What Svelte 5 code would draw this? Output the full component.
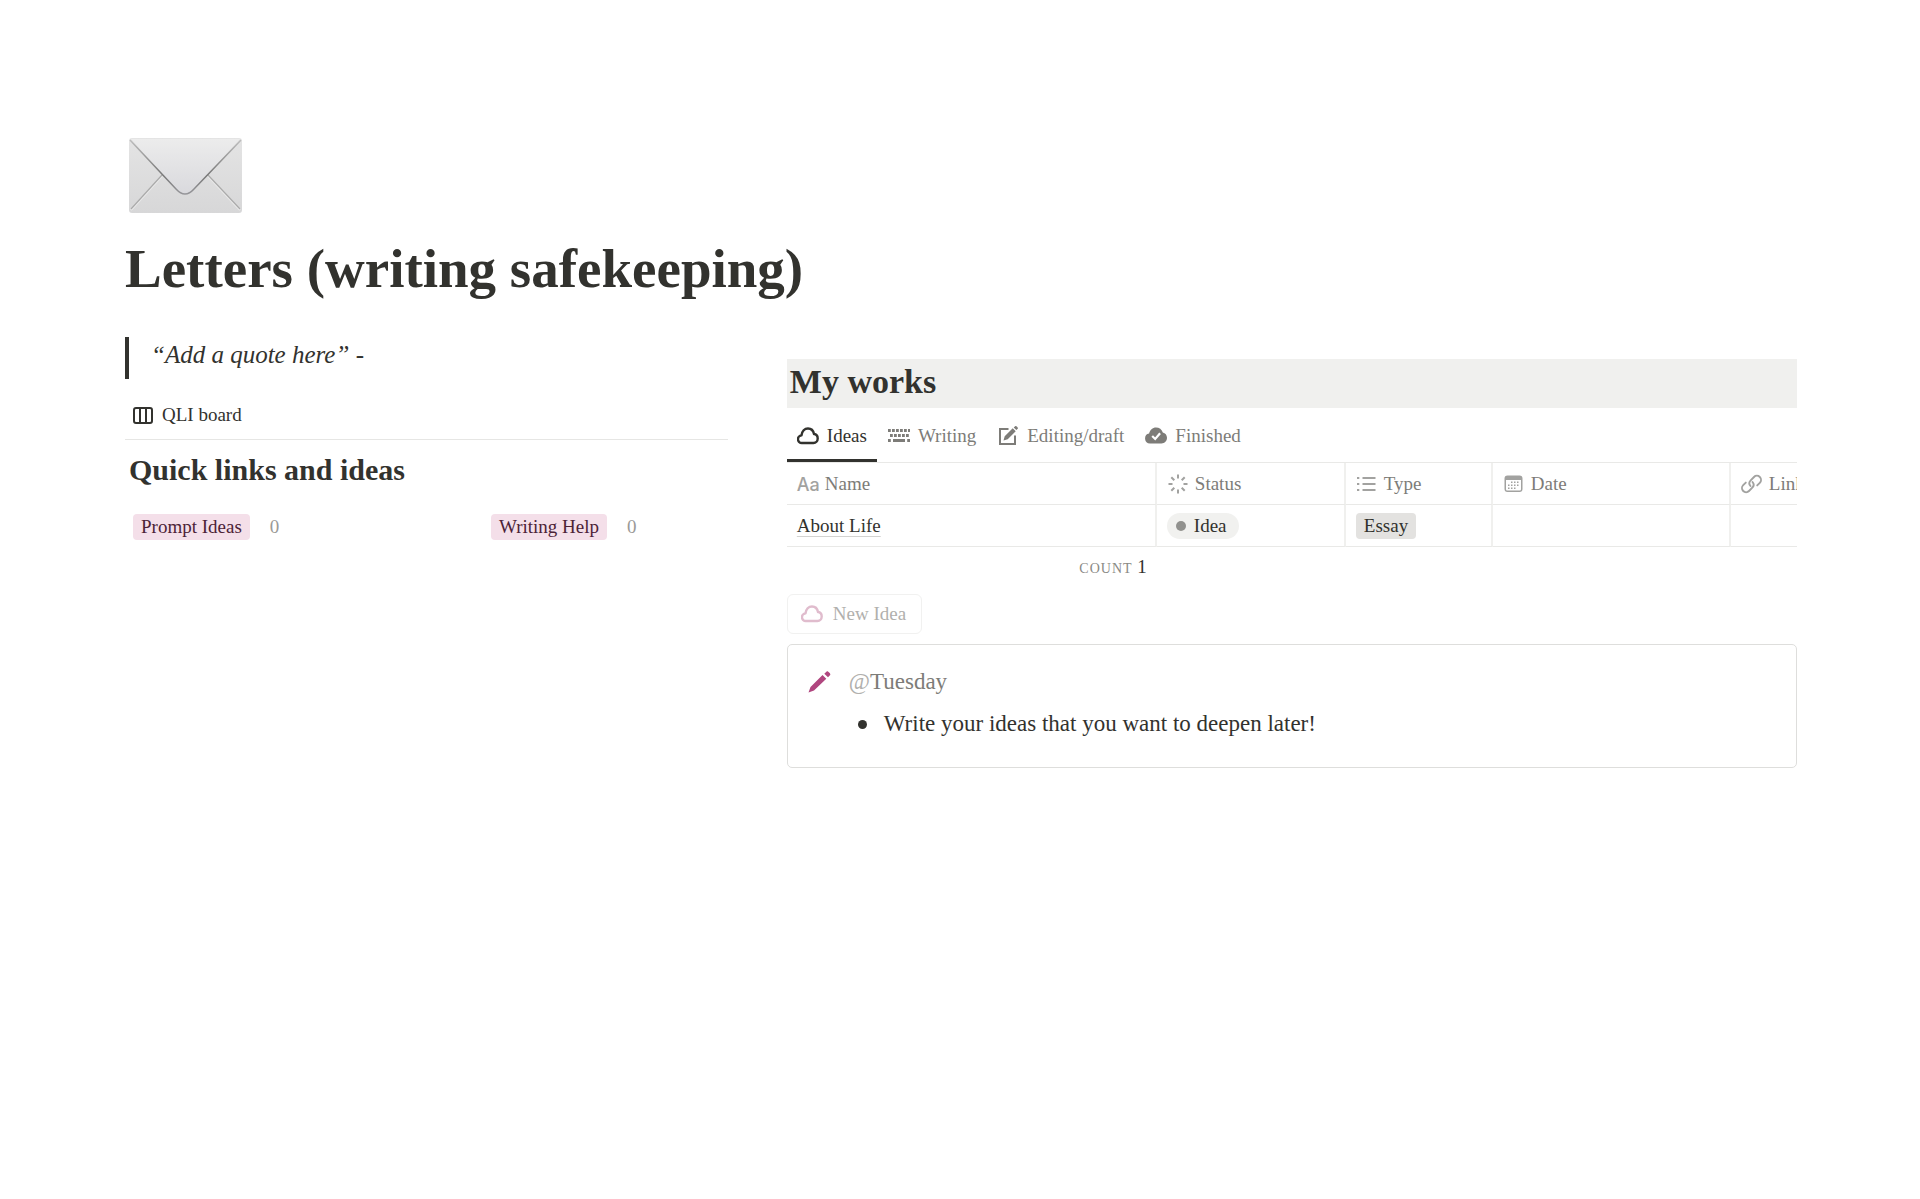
<script>
  let activeTab = $state('Ideas');

  const tabs = [
    { name: 'Ideas', icon: 'cloud' },
    { name: 'Writing', icon: 'keyboard' },
    { name: 'Editing/draft', icon: 'compose' },
    { name: 'Finished', icon: 'cloudCheck' }
  ];

  const columns = [
    { name: 'Name', icon: 'title' },
    { name: 'Status', icon: 'status' },
    { name: 'Type', icon: 'list' },
    { name: 'Date', icon: 'calendar' },
    { name: 'Link', icon: 'link' }
  ];

  const groups = [
    { name: 'Prompt Ideas', count: 0 },
    { name: 'Writing Help', count: 0 }
  ];

  // top-left corners of the keyboard keys
  const keys = [0, 4, 8, 12, 16, 20].map((x) => [x, 4]).concat([2, 6, 10, 14, 18].map((x) => [x, 9]));
  const calendarDots = [[9, 9], [12, 9], [15, 9], [6, 12], [9, 12], [12, 12], [15, 12], [6, 15], [9, 15], [12, 15]];
</script>

{#snippet icon(name)}
  {#if name === 'cloud'}
    <svg class="icon" viewBox="0 0 22 22" fill="none" stroke="currentColor" stroke-width="2.4" stroke-linejoin="round">
      <path d="M5 18a3.800 3.800 0 0 1-.5-7.600C5 6.300 7.600 3.500 11 3.500c3.200 0 5.400 2.500 6 5.500 2.300.2 3.700 2.200 3.700 4.500 0 2.600-1.900 4.500-4.200 4.500z" />
    </svg>
  {:else if name === 'cloudCheck'}
    <svg class="icon" viewBox="0 0 22 22">
      <path fill="currentColor" d="M5 18.500a5 5 0 0 1-.9-9.900C4.900 5 7.600 2.500 11 2.500c3.200 0 5.900 2 6.800 4.900 2.500.5 4.200 2.600 4.200 5.400 0 3.200-2.400 5.700-5.500 5.700z" />
      <path fill="none" stroke="#fff" stroke-width="2.2" d="m7.200 11 3 3 4.900-5.700" />
    </svg>
  {:else if name === 'keyboard'}
    <svg class="icon" viewBox="0 0 22 22" fill="currentColor">
      {#each keys as [x, y]}
        <rect {x} {y} width="2.8" height="3" />
      {/each}
      <path d="M0 14h2.800v3H0zM5 14h12v3H5zM19.200 14H22v3h-2.800z" />
    </svg>
  {:else if name === 'compose'}
    <svg class="icon" viewBox="0 0 22 22">
      <path fill="none" stroke="currentColor" stroke-width="2" d="M11.500 4H3v15h15v-8.500" />
      <path fill="currentColor" d="m6.500 15.500 1.200-4.200 8-8 3 3-8 8zM16.700 2.500 18.400 1c.7-.6 3.100 1.800 2.500 2.500l-1.500 1.600z" />
    </svg>
  {:else if name === 'board'}
    <svg class="icon" viewBox="0 0 22 22" fill="none" stroke="currentColor" stroke-width="2">
      <rect x="2" y="4" width="18" height="15" rx="2" />
      <path d="M8 4v15M14 4v15" />
    </svg>
  {:else if name === 'title'}
    <span class="icon letters" aria-hidden="true">Aa</span>
  {:else if name === 'status'}
    <svg class="icon" viewBox="0 0 22 22" fill="none" stroke="currentColor" stroke-width="2">
      <path d="M11 1.500v4M11 16.500v4M1.500 11h4M16.500 11h4M4.300 4.300l3 3M14.700 14.700l3 3M4.300 17.700l3-3M14.700 7.300l3-3" />
    </svg>
  {:else if name === 'list'}
    <svg class="icon" viewBox="0 0 22 22" fill="none" stroke="currentColor" stroke-width="2">
      <path d="M6.500 5h13M6.500 11h13M6.500 17h13M1 5h2.300M1 11h2.300M1 17h2.300" />
    </svg>
  {:else if name === 'calendar'}
    <svg class="icon" viewBox="0 0 22 22" fill="currentColor">
      <path fill-rule="evenodd" d="M4.500 2.500h12a3 3 0 0 1 3 3v10.500a3 3 0 0 1-3 3h-12a3 3 0 0 1-3-3V5.500a3 3 0 0 1 3-3zM3 7v9c0 1 .5 1.500 1.500 1.500h12c1 0 1.500-.5 1.500-1.500V7z" />
      {#each calendarDots as [x, y]}
        <rect x={x - 1} y={y - 0.5} width="1.5" height="1.5" />
      {/each}
    </svg>
  {:else if name === 'link'}
    <svg class="icon" viewBox="0 0 22 22" fill="none" stroke="currentColor" stroke-width="1.9" stroke-linecap="round">
      <path d="M9.500 13a4.200 4.200 0 0 1 .2-5.700l3.300-3.300a4 4 0 0 1 5.800 5.800l-2.600 2.600" />
      <path d="M11.500 9a4.200 4.200 0 0 1-.2 5.700L8 18a4 4 0 0 1-5.800-5.800l2.600-2.600" />
    </svg>
  {/if}
{/snippet}

<main class="page">
  <svg class="envelope" viewBox="0 0 113 75" role="img" aria-label="Envelope">
    <defs>
      <linearGradient id="paper" x1="0" y1="0" x2="0" y2="1">
        <stop offset="0" stop-color="#e4e4e4" />
        <stop offset="1" stop-color="#d7d7d8" />
      </linearGradient>
      <linearGradient id="flap" x1="0" y1="0" x2="0" y2="1">
        <stop offset="0" stop-color="#ececec" />
        <stop offset="1" stop-color="#d9d9dd" />
      </linearGradient>
      <linearGradient id="fold" x1="0" y1="0" x2="0" y2="1">
        <stop offset="0" stop-color="#bdbdbd" />
        <stop offset="0.65" stop-color="#777" />
        <stop offset="1" stop-color="#96969a" />
      </linearGradient>
    </defs>
    <rect width="113" height="75" rx="3" fill="url(#paper)" />
    <path d="M2 72 33 38M111 72 79 38" fill="none" stroke="#e9e9e9" stroke-width="2" />
    <path d="M2 71 33 37M111 71 79 37" fill="none" stroke="#aaa" stroke-width="1.2" />
    <path d="M2 1h109L65 51q-9 10-18 0z" fill="url(#flap)" />
    <path d="M1 2 47 51q9 10 18 0L112 2" fill="none" stroke="url(#fold)" stroke-width="1.5" />
  </svg>

  <h1>Letters (writing safekeeping)</h1>

  <div class="columns">
    <section class="side">
      <blockquote><em>“Add a quote here”</em> -</blockquote>

      <div class="board-bar">
        <button class="tab current">{@render icon('board')}QLI board</button>
      </div>
      <h2 class="board-title">Quick links and ideas</h2>
      <div class="groups">
        {#each groups as group}
          <div class="group">
            <span class="tag pink">{group.name}</span>
            <span class="group-count">{group.count}</span>
          </div>
        {/each}
      </div>
    </section>

    <section class="works">
      <h2 class="banner">My works</h2>

      <div class="tabs">
        {#each tabs as tab}
          <button class="tab" class:current={activeTab === tab.name} onclick={() => (activeTab = tab.name)}>
            {@render icon(tab.icon)}{tab.name}
          </button>
        {/each}
      </div>

      <div class="table-clip">
        <table>
          <colgroup>
            <col class="col-name" />
            <col class="col-status" />
            <col class="col-type" />
            <col class="col-date" />
            <col class="col-link" />
          </colgroup>
          <thead>
            <tr>
              {#each columns as column}
                <th scope="col"><span class="head">{@render icon(column.icon)}{column.name}</span></th>
              {/each}
            </tr>
          </thead>
          <tbody>
            <tr>
              <td><a href="#about-life">About Life</a></td>
              <td><span class="tag status"><span class="dot"></span>Idea</span></td>
              <td><span class="tag grey">Essay</span></td>
              <td></td>
              <td></td>
            </tr>
          </tbody>
          <tfoot>
            <tr>
              <td class="total"><span class="total-label">COUNT</span> 1</td>
            </tr>
          </tfoot>
        </table>
      </div>

      <button class="new-idea">{@render icon('cloud')}<span>New Idea</span></button>

      <div class="callout">
        <svg class="pencil" viewBox="0 0 24 24" fill="#b0467f" aria-hidden="true">
          <path d="m.5 22.500 2-5.500L14.500 5l3.800 3.800L6 20.500zM16.300 3.700l2.400-2.200c1-.9 4.400 2.500 3.500 3.500L20 7.300z" />
        </svg>
        <div class="callout-body">
          <p><span class="at">@</span>Tuesday</p>
          <ul>
            <li>Write your ideas that you want to deepen later!</li>
          </ul>
        </div>
      </div>
    </section>
  </div>
</main>

<style>
  :global(body) {
    margin: 0;
    background: #fff;
  }

  .page {
    padding: 138px 123px 80px 125px;
    font-family: "Liberation Serif", "Times New Roman", serif;
    font-size: 19px;
    line-height: 24px;
    color: #32322e;
  }

  .envelope {
    display: block;
    width: 113px;
    height: 75px;
    margin-left: 4px;
  }

  h1, h2, p, ul, blockquote {
    margin: 0;
  }

  h1 {
    margin-top: 24px;
    font-size: 55px;
    line-height: 64px;
  }

  button {
    font: inherit;
    color: inherit;
    background: none;
    border: 0;
    cursor: pointer;
  }

  .icon {
    width: 22px;
    height: 22px;
    flex: none;
  }

  .letters {
    font-family: Inter, sans-serif;
    font-size: 18px;
    font-weight: 500;
    line-height: 24px;
    color: #a2a2a0;
  }

  .columns {
    display: grid;
    grid-template-columns: minmax(0, 37fr) minmax(0, 62fr);
    column-gap: 59px;
    margin-top: 36px;
  }

  blockquote {
    padding: 1px 22px 7px;
    border-left: 4px solid #32322e;
    font-size: 25px;
    line-height: 34px;
  }

  .board-bar {
    margin-top: 16px;
    padding: 8px 0 12px;
    border-bottom: 1px solid #e6e6e4;
  }

  .tab {
    display: flex;
    align-items: center;
    gap: 8px;
    padding: 0 10px;
    color: #7d7c78;
  }

  .board-bar .tab {
    padding: 0 7px;
  }

  .tab.current {
    color: #32322e;
  }

  .board-title {
    margin: 10px 4px 0;
    font-size: 30px;
    line-height: 40px;
  }

  .groups {
    display: flex;
    gap: 8px;
    margin-top: 24px;
    padding-left: 8px;
  }

  .group {
    display: flex;
    flex: none;
    align-items: center;
    gap: 20px;
    width: 350px;
  }

  .group-count {
    color: #9b9a97;
  }

  .tag {
    display: inline-block;
    padding: 0 8px;
    border-radius: 4px;
    line-height: 26px;
  }

  .pink {
    background: #f4dfe9;
    color: #4c2337;
  }

  .grey {
    background: #e3e2e0;
  }

  .status {
    display: inline-flex;
    align-items: center;
    gap: 8px;
    padding: 0 12px 0 9px;
    border-radius: 13px;
    background: #f1f1ef;
  }

  .dot {
    width: 10px;
    height: 10px;
    border-radius: 50%;
    background: #91918e;
  }

  .works {
    padding-top: 22px;
  }

  .banner {
    padding: 0 3px 4px;
    background: #f0f0ee;
    font-size: 34px;
    line-height: 45px;
  }

  .tabs {
    display: flex;
    gap: 1px;
    height: 54px;
    border-bottom: 1px solid #e9e9e7;
  }

  .tabs .tab {
    padding-top: 4px;
    border-bottom: 3px solid transparent;
  }

  .tabs .current {
    border-bottom-color: #32322e;
  }

  .table-clip {
    overflow: hidden;
  }

  table {
    width: 1093px;
    table-layout: fixed;
    border-collapse: separate;
    border-spacing: 0;
  }

  .col-name { width: 370px; }
  .col-status { width: 189px; }
  .col-type { width: 147px; }
  .col-date { width: 238px; }
  .col-link { width: 149px; }

  th, td {
    box-sizing: border-box;
    height: 42px;
    padding: 0 10px;
    border-right: 2px solid #f0f0ee;
    border-bottom: 1px solid #e9e9e7;
    text-align: left;
    font-weight: normal;
    vertical-align: middle;
  }

  .head {
    display: flex;
    align-items: center;
    gap: 6px;
    color: #7d7c78;
  }

  .head svg {
    color: #a2a2a0;
  }

  td a {
    color: inherit;
    text-decoration: underline;
    text-decoration-color: #d3d3d1;
    text-underline-offset: 4px;
  }

  .total {
    border: 0;
    text-align: right;
  }

  .total-label {
    font-size: 14px;
    letter-spacing: 1px;
    color: #8a8985;
  }

  .new-idea {
    display: flex;
    align-items: center;
    gap: 10px;
    height: 40px;
    margin-top: 5px;
    padding: 0 15px 0 13px;
    border: 1px solid #f1f1f0;
    border-radius: 6px;
    color: #e0bccd;
  }

  .new-idea span {
    color: #b1b0ad;
  }

  .callout {
    display: flex;
    gap: 17px;
    margin-top: 10px;
    padding: 20px 20px 26px;
    border: 1px solid #dededc;
    border-radius: 5px;
  }

  .pencil {
    width: 24px;
    height: 24px;
    margin-top: 5px;
    flex: none;
  }

  .callout-body {
    font-size: 23px;
    line-height: 34px;
  }

  .callout-body p {
    color: #7d7c78;
  }

  .at {
    color: #b1b0ad;
  }

  ul {
    margin-top: 8px;
    padding-left: 9px;
    list-style: none;
  }

  li {
    display: flex;
    align-items: center;
    gap: 17px;
  }

  li::before {
    content: "";
    width: 9px;
    height: 9px;
    border-radius: 50%;
    background: #32322e;
  }
</style>
